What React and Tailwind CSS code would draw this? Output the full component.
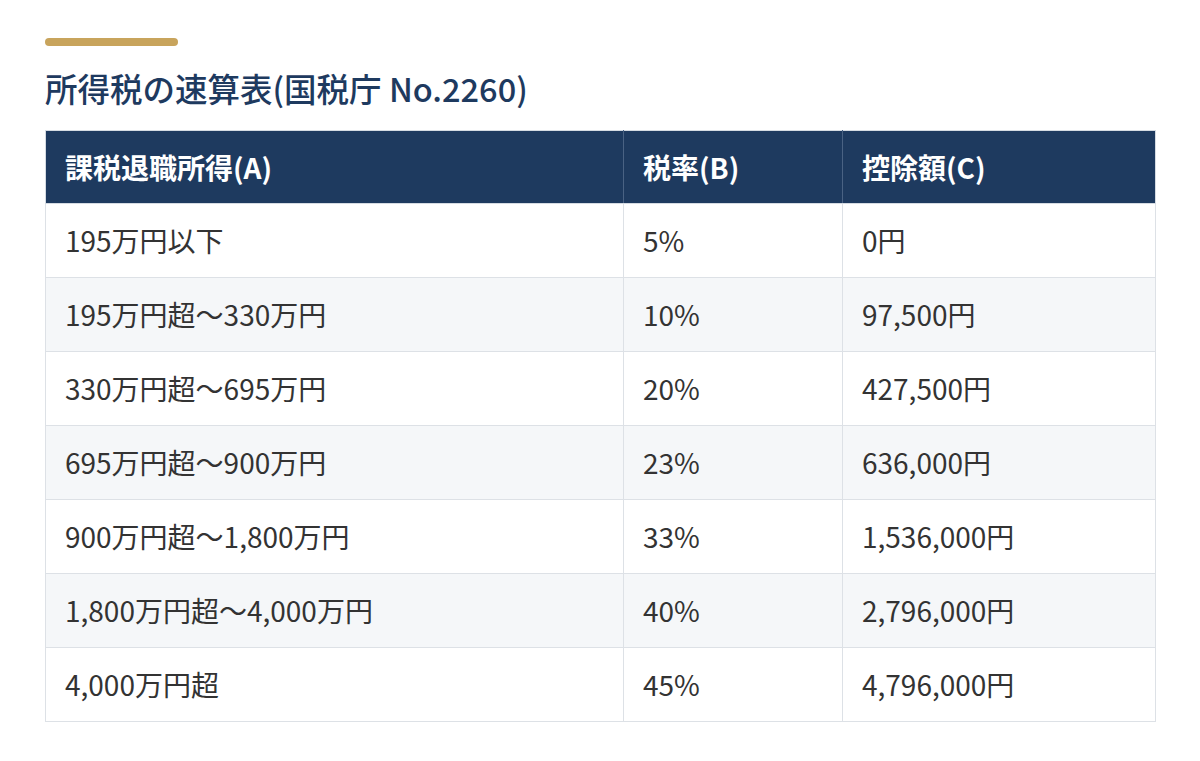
import React from 'react';

const rows = [
  ['195万円以下', '5%', '0円'],
  ['195万円超〜330万円', '10%', '97,500円'],
  ['330万円超〜695万円', '20%', '427,500円'],
  ['695万円超〜900万円', '23%', '636,000円'],
  ['900万円超〜1,800万円', '33%', '1,536,000円'],
  ['1,800万円超〜4,000万円', '40%', '2,796,000円'],
  ['4,000万円超', '45%', '4,796,000円'],
];

export default function App() {
  return (
    <div
      className="min-h-screen bg-white px-[45px] pt-[38px]"
      style={{ fontFamily: '"Noto Sans CJK JP", "Noto Sans", sans-serif' }}
    >
      <div className="w-[133px] h-2 rounded-full bg-[#c8a45c]" />
      <h2 className="mt-[17px] text-[32.5px] leading-[50px] font-medium text-[#1e3a5f]">
        所得税の速算表(国税庁 No.2260)
      </h2>
      <table className="mt-[17px] w-[1110px] border-collapse table-fixed">
        <colgroup>
          <col className="w-[578px]" />
          <col className="w-[219px]" />
          <col className="w-[313px]" />
        </colgroup>
        <thead>
          <tr className="bg-[#1e3a5f] text-white">
            <th className="border border-[#d5dbe2] border-r-[#4a6283] text-left font-bold text-[28px] leading-[42px] px-[19px] py-[15px]">
              課税退職所得(A)
            </th>
            <th className="border border-[#d5dbe2] border-x-[#4a6283] text-left font-bold text-[28px] leading-[42px] px-[19px] py-[15px]">
              税率(B)
            </th>
            <th className="border border-[#d5dbe2] border-l-[#4a6283] text-left font-bold text-[28px] leading-[42px] px-[19px] py-[15px]">
              控除額(C)
            </th>
          </tr>
        </thead>
        <tbody>
          {rows.map((r, i) => (
            <tr key={i} className={i % 2 === 1 ? 'bg-[#f5f7f9]' : 'bg-white'}>
              {r.map((c, j) => (
                <td
                  key={j}
                  className="border border-[#dde1e6] text-left text-[28px] leading-[41px] px-[19px] py-[16px] text-[#333333]"
                >
                  {c}
                </td>
              ))}
            </tr>
          ))}
        </tbody>
      </table>
    </div>
  );
}
